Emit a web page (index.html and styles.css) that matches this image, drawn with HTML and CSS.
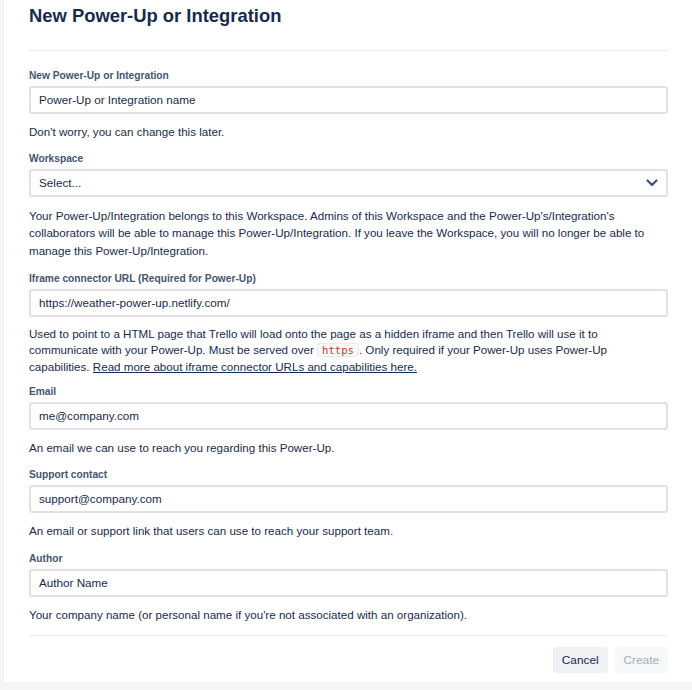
FILE: index.html
```html
<!DOCTYPE html>
<html>
<head>
<meta charset="utf-8">
<link rel="stylesheet" href="styles.css">
</head>
<body>
<div class="page">
  <div class="card">
    <h1 class="title">New Power-Up or Integration</h1>
    <hr class="divider">
    <div class="field first">
      <label class="label">New Power-Up or Integration</label>
      <div class="input">Power-Up or Integration name</div>
      <p class="help">Don't worry, you can change this later.</p>
    </div>
    <div class="field">
      <label class="label">Workspace</label>
      <div class="input select">
        <span>Select...</span>
        <svg class="chev" width="12" height="8" viewBox="0 0 12 8"><path d="M1.5 1.5 L6 6 L10.5 1.5" fill="none" stroke="#42526e" stroke-width="2.2" stroke-linecap="round" stroke-linejoin="round"/></svg>
      </div>
      <p class="help wide">Your Power-Up/Integration belongs to this Workspace. Admins of this Workspace and the Power-Up's/Integration's collaborators will be able to manage this Power-Up/Integration. If you leave the Workspace, you will no longer be able to manage this Power-Up/Integration.</p>
    </div>
    <div class="field ifr">
      <label class="label">Iframe connector URL (Required for Power-Up)</label>
      <div class="input">https://weather-power-up.netlify.com/</div>
      <p class="help tight">Used to point to a HTML page that Trello will load onto the page as a hidden iframe and then Trello will use it to communicate with your Power-Up. Must be served over <code class="code">https</code>. Only required if your Power-Up uses Power-Up capabilities. <a class="link" href="#">Read more about iframe connector URLs and capabilities here.</a></p>
    </div>
    <div class="field">
      <label class="label">Email</label>
      <div class="input">me@company.com</div>
      <p class="help">An email we can use to reach you regarding this Power-Up.</p>
    </div>
    <div class="field">
      <label class="label">Support contact</label>
      <div class="input">support@company.com</div>
      <p class="help">An email or support link that users can use to reach your support team.</p>
    </div>
    <div class="field last">
      <label class="label">Author</label>
      <div class="input">Author Name</div>
      <p class="help">Your company name (or personal name if you're not associated with an organization).</p>
    </div>
    <hr class="divider bottom">
    <div class="actions">
      <button class="btn cancel">Cancel</button>
      <button class="btn create">Create</button>
    </div>
  </div>
</div>
</body>
</html>
```
FILE: styles.css
```css
html, body {
  margin: 0;
  padding: 0;
  background: #f4f5f7;
}
body {
  font-family: "Liberation Sans", Arial, sans-serif;
  color: #172b4d;
}
.page {
  padding-left: 4px;
  height: 690px;
  box-sizing: border-box;
}
.card {
  background: #fff;
  height: 682px;
  box-sizing: border-box;
  padding: 0 24px 0 25px;
}
.title {
  margin: 0;
  padding-top: 3px;
  font-size: 18.4px;
  line-height: 26px;
  font-weight: 700;
  color: #172b4d;
}
.divider {
  border: 0;
  border-top: 1px solid #ebecf0;
  margin: 21px 0 17px;
}
.field {
  display: flex;
  flex-direction: column;
  margin-bottom: 11.5px;
}
.field.first {
  margin-bottom: 10.5px;
}
.field.ifr {
  margin-bottom: 8.5px;
}
.label {
  font-size: 10.2px;
  line-height: 16px;
  font-weight: 700;
  color: #44546f;
  margin-bottom: 2px;
}
.input {
  height: 28px;
  box-sizing: border-box;
  border: 2px solid #dfe1e6;
  border-radius: 3px;
  padding: 0 8px;
  font-size: 11.7px;
  line-height: 24px;
  color: #172b4d;
  display: flex;
  align-items: center;
}
.select {
  justify-content: space-between;
}
.help {
  margin: 9px 0 0;
  font-size: 11.6px;
  line-height: 17px;
  color: #172b4d;
}
.help.wide {
  margin-top: 10.25px;
  line-height: 17.5px;
}
.help.tight {
  margin-top: 9px;
  line-height: 16.5px;
}
.code {
  font-family: "DejaVu Sans Mono", monospace;
  font-size: 10.6px;
  line-height: 12px;
  color: #c9372c;
  background: #f7f8f9;
  border: 1px solid #ebecf0;
  border-radius: 3px;
  padding: 0 4px;
}
.link {
  color: #172b4d;
  text-decoration: underline;
}
.field.last {
  margin-bottom: 0;
}
.divider.bottom {
  margin: 12px 0 11.5px;
}
.actions {
  display: flex;
  justify-content: flex-end;
  gap: 7px;
}
.btn {
  font-family: inherit;
  font-size: 11.8px;
  height: 26px;
  border: 0;
  border-radius: 3px;
  padding: 0 9px;
}
.cancel {
  background: #f0f1f4;
  color: #172b4d;
}
.create {
  background: #f7f8f9;
  color: #a5adba;
}
```
